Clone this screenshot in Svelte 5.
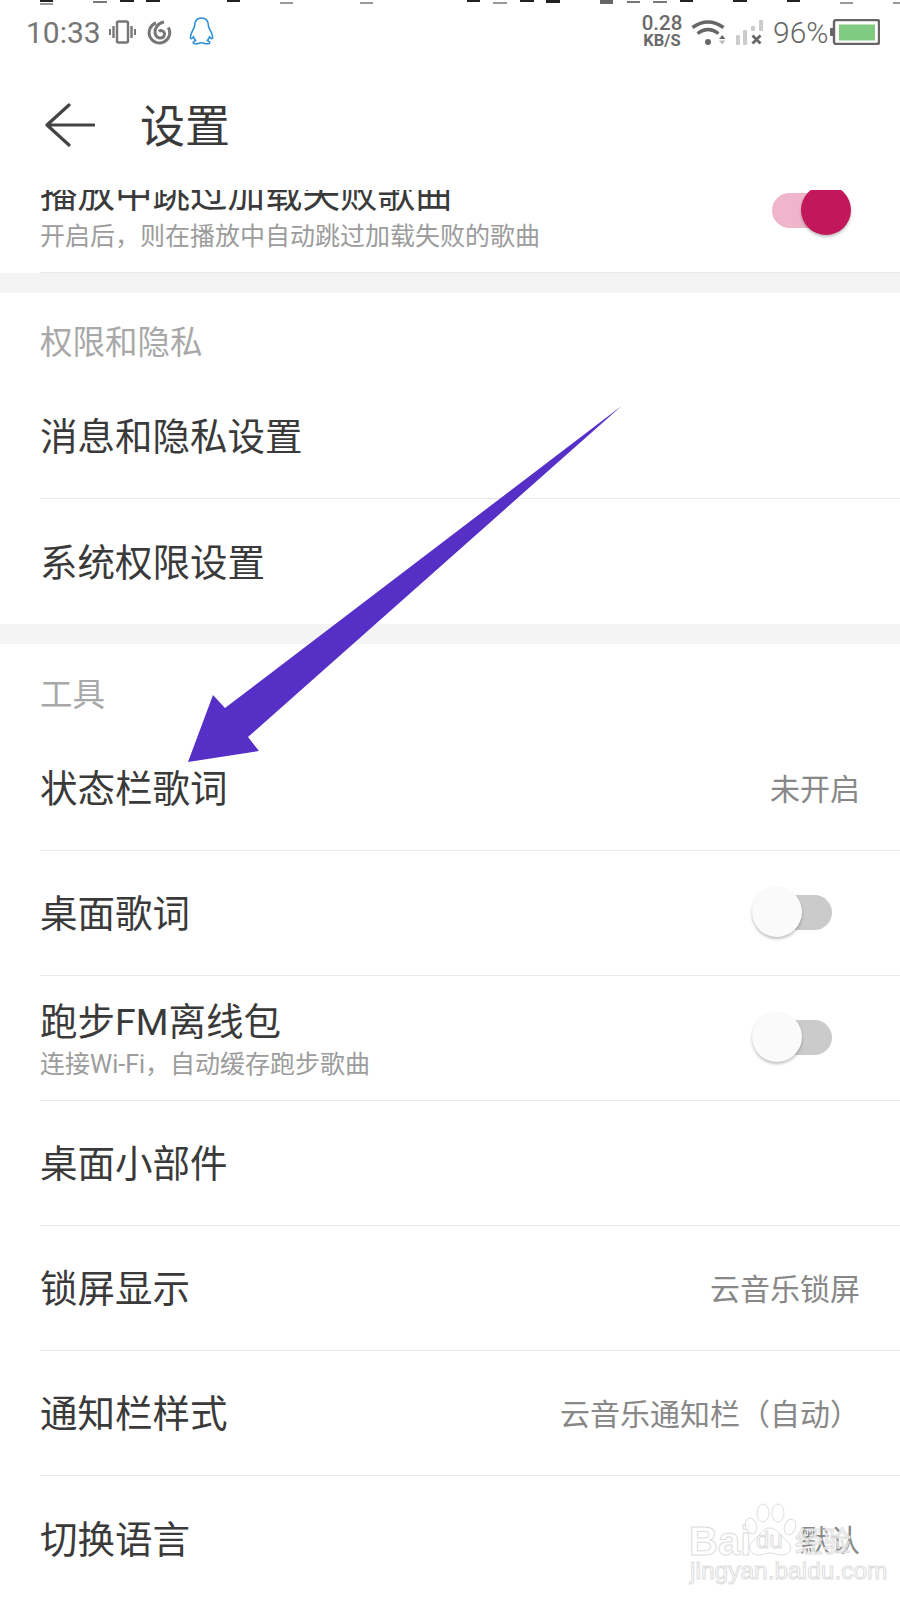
<script>
  const dashes = [
    [40, 0, 13, 2, '#222'], [40, 3, 13, 2, '#999'], [93, 1, 14, 2, '#777'], [120, 0, 14, 2, '#222'], [146, 0, 14, 2, '#222'],
    [227, 0, 13, 2, '#222'], [280, 2, 13, 2, '#999'], [360, 2, 13, 2, '#999'], [467, 0, 13, 2, '#222'], [493, 2, 14, 2, '#999'],
    [520, 0, 14, 2, '#222'], [546, 0, 14, 3, '#222'], [600, 0, 13, 4, '#666'], [627, 1, 13, 2, '#777'], [653, 1, 14, 2, '#777'],
    [680, 0, 13, 2, '#222'], [733, 0, 14, 2, '#222'], [787, 0, 13, 2, '#222'], [840, 2, 13, 2, '#999'], [893, 2, 7, 2, '#999']
  ];
  const dashStyle = (d) => `left:${d[0]}px;top:${d[1]}px;width:${d[2]}px;height:${d[3]}px;background:${d[4]}`;
</script>

<div class="page">
  <div class="dashes">
    {#each dashes as d}<i style={dashStyle(d)}></i>{/each}
  </div>

  <header class="status">
    <span class="time">10:33</span>
    <svg class="vib" viewBox="0 0 27 24" width="27" height="24" fill="none" stroke="#777">
      <rect x="8" y="1.5" width="11" height="21" rx="1.5" stroke-width="2.4"/>
      <path d="M4.5 6v12M22.5 6v12" stroke-width="2.4"/>
      <path d="M1 9v6M26 9v6" stroke-width="2"/>
    </svg>
    <svg class="net" viewBox="0 0 25 25" width="25" height="25" fill="none" stroke="#777" stroke-width="3">
      <path d="M9 3A10.3 10.3 0 1 0 21.3 7.5"/>
      <path d="M17 2C11 3 7.6 8 8 12.8C8.4 16.8 11.4 18.4 14 18C17 17.5 18.2 14.8 17.2 12.6C16.2 10.4 13.5 10 12 11.6"/>
    </svg>
    <svg class="qq" viewBox="0 0 25 28" width="25" height="28" fill="none" stroke="#2e8fd6" stroke-width="1.6" stroke-linejoin="round">
      <path d="M12.5 1C7.8 1 5.8 4.6 5.6 8.5C5.5 10.6 4.7 11.5 3.6 13.6C2 16.5 .9 20 1.7 21.4C2.3 22.3 3.7 20.9 4.4 19.5C4.8 21.2 5.6 22.5 6.7 23.4C5.1 24 4 24.7 4.2 25.7C4.5 27 8.3 27 10 26.2C10.8 25.8 11.4 25.7 12.5 25.7C13.6 25.7 14.2 25.8 15 26.2C16.7 27 20.5 27 20.8 25.7C21 24.7 19.9 24 18.3 23.4C19.4 22.5 20.2 21.2 20.6 19.5C21.3 20.9 22.7 22.3 23.3 21.4C24.1 20 23 16.5 21.4 13.6C20.3 11.5 19.5 10.6 19.4 8.5C19.2 4.6 17.2 1 12.5 1Z"/>
    </svg>
    <div class="right">
      <div class="speed"><b>0.28</b><b class="unit">KB/S</b></div>
      <svg class="wifi" viewBox="0 0 36 25" width="36" height="25" fill="none" stroke="#666">
        <path d="M1.5 7.5Q17 -3.5 32.5 7.5" stroke-width="3.4"/>
        <path d="M6.5 13.5Q17 5.5 27.5 13.5" stroke-width="3.2"/>
        <circle cx="17" cy="22" r="3" fill="#666" stroke="none"/>
        <path d="M28 19l3.2-4 3.2 4z" fill="#666" stroke="none"/>
        <path d="M28 20.5l3.2 4 3.2-4z" fill="#bbb" stroke="none"/>
      </svg>
      <svg class="sig" viewBox="0 0 28 25" width="28" height="25">
        <rect x="1" y="15" width="4" height="10" rx="1" fill="#ccc"/>
        <rect x="8" y="10" width="4" height="15" rx="1" fill="#ccc"/>
        <rect x="16" y="6" width="4" height="5" rx="1" fill="#ccc"/>
        <rect x="24" y="0" width="4" height="11" rx="1" fill="#ccc"/>
        <path d="M17.5 15.5l8 8M25.5 15.5l-8 8" stroke="#666" stroke-width="2.8"/>
      </svg>
      <span class="pct">96%</span>
      <svg class="bat" viewBox="0 0 50 26" width="50" height="26">
        <rect x="0" y="9" width="4" height="8" rx="1" fill="#666"/>
        <rect x="4" y="1" width="45" height="24" rx="2" fill="#fff" stroke="#666" stroke-width="2.4"/>
        <rect x="9" y="5.5" width="36" height="16" fill="#7fcb7f"/>
      </svg>
    </div>
  </header>

  <div class="toolbar">
    <svg class="back" viewBox="0 0 50 44" width="50" height="44" fill="none" stroke="#444" stroke-width="3.2" stroke-linecap="round" stroke-linejoin="round">
      <path d="M24 2L2 22L24 42M2 22H49"/>
    </svg>
    <h1>设置</h1>
  </div>

  <main class="list">
    <div class="inner">
      <section>
        <div class="row sub-row">
          <div class="label"><div class="title">播放中跳过加载失败歌曲</div><div class="sub">开启后，则在播放中自动跳过加载失败的歌曲</div></div>
          <div class="sw on"><span class="track"></span><span class="knob"></span></div>
        </div>
      </section>
      <div class="band"></div>
      <section>
        <div class="head">权限和隐私</div>
        <div class="row"><div class="title">消息和隐私设置</div></div>
        <div class="row last"><div class="title">系统权限设置</div></div>
      </section>
      <div class="band"></div>
      <section>
        <div class="head tools">工具</div>
        <div class="row"><div class="title">状态栏歌词</div><div class="val">未开启</div></div>
        <div class="row"><div class="title">桌面歌词</div><div class="sw"><span class="track"></span><span class="knob"></span></div></div>
        <div class="row sub-row">
          <div class="label"><div class="title">跑步FM离线包</div><div class="sub">连接Wi-Fi，自动缓存跑步歌曲</div></div>
          <div class="sw"><span class="track"></span><span class="knob"></span></div>
        </div>
        <div class="row"><div class="title">桌面小部件</div></div>
        <div class="row"><div class="title">锁屏显示</div><div class="val">云音乐锁屏</div></div>
        <div class="row"><div class="title">通知栏样式</div><div class="val">云音乐通知栏（自动）</div></div>
        <div class="row last"><div class="title">切换语言</div><div class="val">默认</div></div>
      </section>
    </div>
  </main>

  <svg class="arrow" viewBox="0 0 900 1600" width="900" height="1600">
    <path d="M621.5 406L248 737L259 751L188 762L213 695L225 708Z" fill="#552fc6"/>
  </svg>

  <div class="wm">
    <span class="bai">Bai</span>
    <svg class="paw" viewBox="0 0 52 54" width="52" height="54" fill="rgba(255,255,255,.6)" stroke="#ddd" stroke-width="1">
      <ellipse cx="7" cy="23" rx="5.5" ry="8" transform="rotate(-18 7 23)"/>
      <ellipse cx="19" cy="10" rx="6" ry="9"/>
      <ellipse cx="34" cy="10" rx="6" ry="9"/>
      <ellipse cx="46" cy="24" rx="5.5" ry="8" transform="rotate(18 46 24)"/>
      <path d="M26 25C18 25 16 33 9 38C2 44 7 53 16 52C21 51 23 50 26 50C30 50 33 52 38 52C46 52 50 44 43 38C36 33 34 25 26 25Z"/>
    </svg>
    <span class="du">du</span>
    <span class="jy">经验</span>
    <span class="url">jingyan.baidu.com</span>
  </div>
</div>

<style>
  :global(body) { margin: 0; background: #fff; }
  .page { position: relative; width: 900px; height: 1600px; overflow: hidden; background: #fff; font-family: Roboto, "Noto Sans CJK SC", sans-serif; }
  .dashes { position: absolute; inset: 0 0 auto 0; height: 6px; }
  .dashes i { position: absolute; display: block; }

  .status { height: 64px; box-sizing: border-box; display: flex; align-items: center; padding: 0 20px 0 26px; color: #777; }
  .time { font-size: 30px; font-weight: 400; width: 72px; color: #757575; white-space: nowrap; }
  .vib { margin-left: 11px; }
  .net { margin-left: 11px; }
  .qq { margin-left: 17px; margin-top: -3px; }
  .right { margin-left: auto; display: flex; align-items: center; }
  .speed { width: 42px; display: flex; flex-direction: column; align-items: center; color: #6a6a6a; margin-top: -2px; }
  .speed b { font-size: 20.5px; font-weight: 500; line-height: 19px; }
  .speed .unit { font-size: 16.5px; font-weight: 700; line-height: 15px; }
  .wifi { margin-left: 8px; }
  .sig { margin-left: 8px; }
  .pct { margin-left: 10px; font-size: 30px; font-weight: 300; color: #666; width: 54px; }
  .bat { margin-left: 3px; }

  .toolbar { height: 126px; box-sizing: border-box; display: flex; align-items: center; padding: 0 0 4px 45px; }
  h1 { margin: 4px 0 0 45px; font-size: 45px; font-weight: 400; color: #3a3a3a; line-height: 1; }

  .list { height: 1410px; overflow: hidden; }
  .inner { margin-top: -42px; }
  .band { height: 20px; background: #f4f4f4; }
  .head { height: 81px; box-sizing: border-box; padding: 30px 0 0 40px; font-size: 32.5px; line-height: 40px; color: #a8a8a8; }
  .head.tools { height: 82px; padding-top: 31px; }
  .row { height: 125px; box-sizing: border-box; margin-left: 40px; padding-right: 40px; display: flex; align-items: center; justify-content: space-between; border-bottom: 1.5px solid #e9e9e9; }
  .row.last { border-bottom: 0; }
  .title { font-size: 37.5px; line-height: 50px; color: #3a3a3a; margin-top: 2px; }
  .sub-row .title { margin-top: 0; }
  .label { margin-top: 4px; }
  .sub { font-size: 25px; line-height: 36px; color: #9c9c9c; }
  .val { font-size: 30px; color: #888; margin-top: -2px; }
  .sw { position: relative; width: 99px; height: 50px; margin: -2px 9px 0 0; flex: none; }
  .sw.on { margin-top: 0; }
  .track { position: absolute; left: 20px; top: 8px; width: 60px; height: 35px; border-radius: 18px; background: #cbcbcb; }
  .knob { position: absolute; left: 0; top: 0; width: 50px; height: 50px; border-radius: 50%; background: #fafafa; box-shadow: 0 2px 3px rgba(0,0,0,.25); }
  .sw.on .track { background: #efb6cb; }
  .sw.on .knob { left: 49px; background: #c2185b; }

  .arrow { position: absolute; left: 0; top: 0; pointer-events: none; }
  .wm { position: absolute; left: 0; top: 0; width: 900px; height: 1600px; pointer-events: none; }
  .wm span { position: absolute; color: rgba(255,255,255,.6); -webkit-text-stroke: 1px #ddd; font-family: "Liberation Sans", sans-serif; line-height: 1; white-space: nowrap; }
  .bai { left: 689px; top: 1521px; font-size: 40px; font-weight: 700; }
  .paw { position: absolute; left: 744px; top: 1503px; }
  .du { left: 756px; top: 1528px; font-size: 24px; }
  .wm .jy { left: 795px; top: 1526px; font-size: 28px; font-family: "Noto Sans CJK SC", sans-serif; }
  .url { left: 690px; top: 1559px; font-size: 24.5px; }
</style>
